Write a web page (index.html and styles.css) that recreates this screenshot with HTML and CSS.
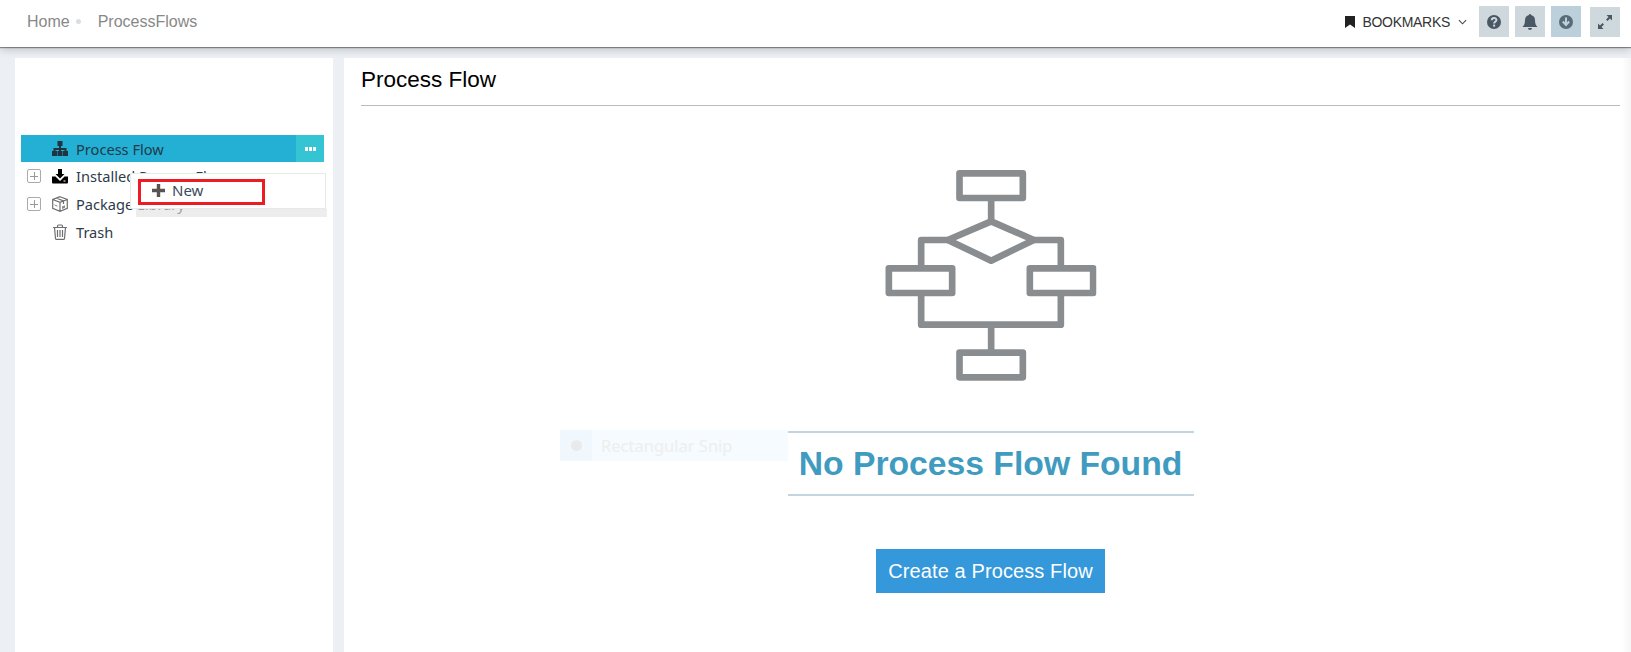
FILE: index.html

```html
<!DOCTYPE html>
<html lang="en">
<head>
    <meta charset="UTF-8">
    <meta name="viewport" content="width=device-width, initial-scale=1.0">
    <title>Process Flow</title>
    <link rel="stylesheet" href="styles.css">
</head>
<body>
    <!-- top bar -->
    <header class="topbar">
        <nav class="crumbs">
            <a class="crumb">Home</a>
            <span class="crumb-dot"></span>
            <a class="crumb">ProcessFlows</a>
        </nav>
        <div class="top-actions">
            <div class="bookmarks">
                <svg class="bookmark-icon" viewBox="0 0 10 12"><path d="M0 0h10v12L5 8.5 0 12z"/></svg>
                <span>BOOKMARKS</span>
                <svg class="chevron" viewBox="0 0 10 6"><path d="M1 1l4 4 4-4"/></svg>
            </div>
            <button class="top-btn">
                <svg viewBox="0 0 16 16"><circle cx="8" cy="8" r="7" fill="#4a5866"/><path d="M5.8 6.2c0-3 4.6-3 4.6-.2 0 1.7-2.3 1.7-2.3 3.4" fill="none" stroke="#cfd8dc" stroke-width="2"/><rect x="7.1" y="10.6" width="2" height="2" fill="#cfd8dc"/></svg>
            </button>
            <button class="top-btn">
                <svg viewBox="0 0 16 16"><path d="M8 0c.7 0 1 .5 1 1.100C11.600 1.600 13 3.600 13 6c0 4 1 5.500 2.500 7H.5C2 11.500 3 10 3 6c0-2.400 1.400-4.400 4-4.900C7 .5 7.300 0 8 0z" fill="#4a5866"/><path d="M6 14h4a2 2 0 0 1-4 0z" fill="#4a5866"/></svg>
            </button>
            <button class="top-btn top-btn-blue">
                <svg viewBox="0 0 16 16"><circle cx="8" cy="8" r="7" fill="#5a6b78"/><path d="M8 3.500v7M4.800 7.500L8 11l3.200-3.500" fill="none" stroke="#bcd0db" stroke-width="2"/></svg>
            </button>
            <button class="top-btn top-btn-last">
                <svg viewBox="0 0 16 16"><path d="M9.500 1H15v5.500l-2-2L10.500 7 9 5.500 11.500 3zM6.500 15H1V9.500l2 2L5.500 9 7 10.500 4.500 13z" fill="#4a5866"/></svg>
            </button>
        </div>
    </header>

    <div class="page">
        <!-- left tree -->
        <aside class="sidebar">
            <ul class="tree">
                <li class="tree-row tree-row-active">
                    <span class="expander"></span>
                    <svg class="tree-icon" viewBox="0 0 16 16"><path d="M5.500 0h5v5H9v2h5.500v3H16v5h-5v-5h1.500V9H9v1h1.500v5h-5v-5H7V9H3.500v1H5v5H0v-5h1.500V7H7V5H5.500z" fill="#1f3340"/></svg>
                    <span class="tree-label">Process Flow</span>
                    <span class="row-menu"><i></i><i></i><i></i></span>
                </li>
                <li class="tree-row">
                    <span class="expander expander-plus"></span>
                    <svg class="tree-icon" viewBox="0 0 16 16"><path d="M6 1h4v5h2.500L8 10.500 3.500 6H6z" fill="#000"/><path d="M0 8.500h3.500L8 13l4.500-4.500H16v6a1 1 0 0 1-1 1H1a1 1 0 0 1-1-1zM11.500 12.500v1h2v-1z" fill="#000" fill-rule="evenodd"/></svg>
                    <span class="tree-label">Installed Process Flows</span>
                </li>
                <li class="tree-row">
                    <span class="expander expander-plus"></span>
                    <svg class="tree-icon" viewBox="0 0 16 16"><path d="M8 .7l7.300 2.800v8.800L8 15.300.7 12.300V3.500zM.7 3.500L8 6.300l7.300-2.800M8 6.300v9M4.200 2l7.300 2.900v3" fill="none" stroke="#6f6f6f" stroke-width="1.200"/><path d="M10 10.500l3-1.200v2.400l-3 1.200z" fill="#8a8a8a"/><path d="M2.500 9l3 1.200" stroke="#8a8a8a" fill="none"/></svg>
                    <span class="tree-label">Package Library</span>
                </li>
                <li class="tree-row">
                    <span class="expander"></span>
                    <svg class="tree-icon" viewBox="0 0 16 16"><path d="M1 3.500h14M5.500 3.500V2c0-.6.4-1 1-1h3c.6 0 1 .4 1 1v1.500M2.500 3.500l1 11c0 .4.300.8.800.8h7.400c.5 0 .8-.4.800-.8l1-11M5.500 6v7M8 6v7M10.500 6v7" fill="none" stroke="#6f6f6f" stroke-width="1.200"/></svg>
                    <span class="tree-label">Trash</span>
                </li>
            </ul>

            <!-- context menu opened from the row -->
            <div class="menu-strip"></div>
            <div class="context-menu">
                <div class="menu-item">
                    <svg class="plus-icon" viewBox="0 0 13 13"><path d="M4.800 0h3.400v4.800H13v3.400H8.200V13H4.800V8.200H0V4.800h4.800z"/></svg>
                    <span>New</span>
                </div>
            </div>
        </aside>

        <main class="content">
            <h1 class="content-title">Process Flow</h1>
            <section class="empty-state">
                <svg class="flow-art" viewBox="0 0 708 720">
                    <g fill="none" stroke="#8a8d90" stroke-width="20" stroke-linejoin="round">
                        <rect x="297" y="52" width="190" height="74"/>
                        <path d="M392 126v64"/>
                        <path d="M392 196l128 56-128 62-130-62z"/>
                        <path d="M262 252h-80v85M520 252h81v85"/>
                        <rect x="85" y="337" width="190" height="74"/>
                        <rect x="508" y="337" width="190" height="74"/>
                        <path d="M182 411v95h419v-95M392 506v84"/>
                        <rect x="297" y="590" width="190" height="74"/>
                    </g>
                </svg>
                <h2 class="empty-heading">No Process Flow Found</h2>
                <button class="create-btn">Create a Process Flow</button>
            </section>
        </main>
    </div>

    <!-- faded snipping tool window caught in the screenshot -->
    <div class="snip-ghost">
        <span class="snip-icon"><i></i></span>
        <span class="snip-text">Rectangular Snip</span>
    </div>
</body>
</html>
```

FILE: styles.css

```css
* {
    box-sizing: border-box;
}
html, body {
    height: 100%;
}
body {
    margin: 0;
    font-family: "Liberation Sans", Arial, sans-serif;
    background-color: #ecf0f4;
    color: #333;
    overflow: hidden;
    position: relative;
}
.topbar {
    height: 47px;
    background-color: #fff;
    display: flex;
    justify-content: space-between;
    align-items: flex-start;
    padding: 6px 11px 0 27px;
    box-shadow: 0 1px 1px rgba(0, 0, 0, 0.4), 0 3px 8px rgba(0, 0, 0, 0.18);
    position: relative;
}
.crumbs {
    display: flex;
    align-items: center;
    height: 31px;
    font-size: 16px;
    color: #888;
}
.crumb-dot {
    width: 5px;
    height: 5px;
    border-radius: 50%;
    background-color: #ddd;
    margin: 0 17px 0 6px;
}
.top-actions {
    display: flex;
    align-items: flex-start;
}
.bookmarks {
    display: flex;
    align-items: center;
    height: 31px;
    font-size: 14px;
    letter-spacing: -0.3px;
    color: #333;
    margin-right: 12px;
}
.bookmark-icon {
    width: 10px;
    height: 12px;
    margin-right: 7px;
    fill: #222;
}
.chevron {
    width: 9px;
    height: 6px;
    margin-left: 8px;
    fill: none;
    stroke: #444;
    stroke-width: 1.2;
}
.top-btn {
    width: 30px;
    height: 31px;
    border: none;
    padding: 0;
    margin-right: 6px;
    background-color: #cfd8dc;
    display: flex;
    align-items: center;
    justify-content: center;
}
.top-btn svg {
    width: 16px;
    height: 16px;
}
.top-btn-blue {
    background-color: #bcd0db;
}
.top-btn-last {
    margin: 1px 0 0 3px;
    height: 30px;
}
.page {
    display: flex;
    gap: 11px;
    height: calc(100% - 58px);
    margin: 11px 0 0 15px;
}
.sidebar {
    width: 318px;
    flex-shrink: 0;
    background-color: #fff;
    padding: 77px 9px 0 6px;
    position: relative;
}
.tree {
    list-style: none;
    margin: 0;
    padding: 0;
    font-family: "Noto Sans", sans-serif;
    font-size: 14.6px;
    color: #2f3b4a;
}
.tree-row {
    display: flex;
    align-items: center;
    height: 28px;
}
.tree-row-active {
    height: 27px;
    background-color: #24b0d4;
    color: #1f3a4a;
}
.expander {
    width: 14px;
    height: 14px;
    margin: 0 11px 0 6px;
    flex-shrink: 0;
}
.expander-plus {
    border: 1px solid #aaa;
    border-radius: 2px;
    background:
        linear-gradient(#999, #999) center / 8px 1px no-repeat,
        linear-gradient(#999, #999) center / 1px 8px no-repeat;
}
.tree-icon {
    width: 16px;
    height: 16px;
    margin-right: 8px;
    flex-shrink: 0;
}
.row-menu {
    margin-left: auto;
    width: 28px;
    height: 100%;
    background-color: #35c4d4;
    display: flex;
    align-items: center;
    justify-content: center;
    gap: 1px;
}
.row-menu i {
    width: 3px;
    height: 4px;
    background-color: #fff;
}
.context-menu {
    position: absolute;
    left: 115px;
    top: 115px;
    width: 196px;
    height: 36px;
    background-color: #fff;
    border: 1px solid #e8e8e8;
    padding: 5px 7px;
}
.menu-strip {
    position: absolute;
    left: 121px;
    top: 151px;
    width: 191px;
    height: 8px;
    background-color: rgba(225, 225, 225, 0.6);
}
.menu-item {
    width: 127px;
    height: 26px;
    border: 3px solid #ed1c24;
    display: flex;
    align-items: center;
    padding: 0 0 4px 11px;
    font-family: "Noto Sans", sans-serif;
    font-size: 15px;
    color: #3d4a5c;
}
.plus-icon {
    width: 13px;
    height: 13px;
    margin-right: 7px;
    fill: #5b5350;
}
.content {
    flex: 1;
    background: linear-gradient(to right, #fff calc(100% - 9px), #f5f5f5);
    padding: 0 11px 0 17px;
    display: flex;
    flex-direction: column;
}
.content-title {
    margin: 0;
    height: 48px;
    line-height: 44px;
    font-size: 22.5px;
    font-weight: normal;
    color: #000;
    border-bottom: 1px solid #bbb;
}
.empty-state {
    display: flex;
    flex-direction: column;
    align-items: center;
    padding-top: 50px;
}
.flow-art {
    width: 236px;
    height: 240px;
    margin-bottom: 35px;
    transform: translateX(-12.5px);
}
.empty-heading {
    width: 406px;
    margin: 0 0 53px;
    height: 65px;
    line-height: 60px;
    text-align: center;
    font-size: 33.7px;
    color: #3f9cc0;
    border-top: 2px solid #c5d5e0;
    border-bottom: 2px solid #c5d5e0;
}
.create-btn {
    width: 229px;
    height: 44px;
    border: none;
    background-color: #3498db;
    color: #fff;
    font-family: "Liberation Sans", Arial, sans-serif;
    font-size: 20px;
    letter-spacing: 0.1px;
}
.snip-ghost {
    position: absolute;
    left: 560px;
    top: 430px;
    width: 228px;
    height: 31px;
    display: flex;
    align-items: center;
    background-color: #f5fbfe;
    font-family: "Noto Sans", sans-serif;
    font-size: 16.5px;
    color: #eee;
}
.snip-icon {
    width: 32px;
    height: 100%;
    background-color: #f0f8fd;
    margin-right: 9px;
    display: flex;
    align-items: center;
    justify-content: center;
}
.snip-icon i {
    width: 11px;
    height: 11px;
    border-radius: 50%;
    background-color: #e8eaec;
}
```
